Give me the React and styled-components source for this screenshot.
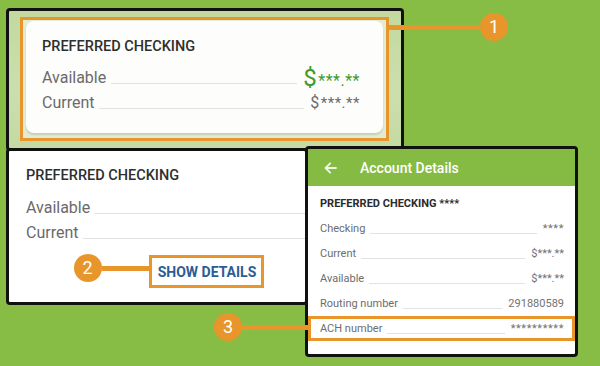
import styled, { createGlobalStyle } from "styled-components";

const GlobalStyle = createGlobalStyle`
  html, body {
    margin: 0;
    padding: 0;
    background: #87bc45;
  }
  body {
    font-family: Roboto, "Noto Sans", Arial, sans-serif;
    width: 600px;
    height: 366px;
    overflow: hidden;
  }
  * { box-sizing: border-box; }
`;

const ORANGE = "#e8952b";

const Board = styled.div`
  display: grid;
  grid-template-columns: 302px 270px;
  align-items: start;
  padding: 8px 0 0 6px;
`;

const Shot = styled.section`
  position: relative;
  border: 3px solid #111;
  border-radius: 4px;
  background: #fff;
`;

const SummaryShot = styled(Shot)`
  grid-column: 1 / -1;
  width: 398px;
  height: 143px;
  padding: 6px 0 0 11px;
  background: linear-gradient(180deg, #c3d99f 0%, #cbdfae 60%, #c4d9a3 100%);
`;

const CardShot = styled(Shot)`
  margin-top: -3px;
  height: 157px;
  overflow: hidden;
`;

const DetailsShot = styled(Shot)`
  margin: -5px 0 0 -3px;
  height: 211px;
  z-index: 1;
`;

const Frame = styled.div`
  position: relative;
  width: 369px;
  height: 124px;
  border: 3px solid ${ORANGE};
  background: #e2ebd3;
  padding: 1px 3px 5px;
`;

const Card = styled.div`
  height: 100%;
  background: #fdfdfc;
  border-radius: 8px;
  box-shadow: 0 2px 2px rgba(0, 0, 0, 0.12);
  padding: 16px 23px 0 16px;
`;

const Wide = styled.div`
  width: 392px;
  padding: 15px 0 0 17px;
`;

const Title = styled.div`
  font-size: 14.5px;
  font-weight: 500;
  line-height: 20px;
  color: #2e2e2e;
  margin-bottom: ${p => p.$gap}px;
`;

const Row = styled.div`
  display: flex;
  align-items: center;
  height: 25px;
  font-size: 16px;
  color: #6a6a6a;
`;

const Leader = styled.span`
  flex: 1;
  height: 1px;
  margin: ${p => p.$drop}px 6px 0 5px;
  background: #e2e2e2;
`;

const Money = styled.span`
  color: ${p => (p.$tone === "green" ? "#3f9a2a" : "#6a6a6a")};
  font-size: ${p => p.$size}px;
  letter-spacing: 0.5px;
`;

const Sign = styled.span`
  font-size: ${p => p.$size}px;
  margin-right: 1px;
`;

const Actions = styled.div`
  display: flex;
  justify-content: center;
  margin-top: 10px;
  padding-right: 14px;
`;

const ActionBox = styled.div`
  position: relative;
  border: 3px solid ${ORANGE};
  padding: 0 5px 0 6px;
  height: 33px;
  display: flex;
  align-items: center;
`;

const TextButton = styled.span`
  font-size: 14px;
  font-weight: 700;
  color: #2c5c94;
`;

const Callout = styled.div`
  position: absolute;
  top: ${p => p.$top}px;
  ${p => (p.$side === "right" ? "left: 100%;" : "right: 100%;")}
  display: flex;
  flex-direction: ${p => (p.$side === "right" ? "row" : "row-reverse")};
  align-items: center;
  transform: translateY(-50%);
`;

const Leash = styled.span`
  width: ${p => p.$length}px;
  height: 5px;
  background: ${ORANGE};
`;

const Badge = styled.span`
  width: 28px;
  height: 28px;
  border-radius: 50%;
  background: ${ORANGE};
  color: #fff;
  font-size: 18px;
  display: grid;
  place-items: center;
  line-height: 1;
`;

const AppBar = styled.header`
  height: 37px;
  background: #85bb43;
  display: flex;
  align-items: center;
  padding-left: 16px;
  gap: 23px;
  color: #fff;
  font-size: 14px;
  font-weight: 500;
`;

const DetailsBody = styled.div`
  padding: 5px 0 0;
`;

const DetailTitle = styled.div`
  height: 25px;
  display: flex;
  align-items: center;
  padding: 0 12px;
  font-size: 11px;
  font-weight: 700;
  color: #2b2b2b;
`;

const DetailRow = styled.div`
  position: relative;
  height: 25px;
  display: flex;
  align-items: center;
  padding: 0 11px 0 12px;
  font-size: 11px;
  color: #6d6d6d;
  box-shadow: ${p => (p.$marked ? `inset 0 0 0 3px ${ORANGE}` : "none")};
`;

const DetailValue = styled.span`
  color: #727272;
  letter-spacing: ${p => (p.$stars ? "0.6px" : "0")};
`;

function BackArrow() {
  return (
    <svg width="13" height="12" viewBox="0 0 13 12" fill="none">
      <path d="M12 6H1.8M6.2 1.3L1.5 6l4.7 4.7" stroke="#eef6e4" strokeWidth="1.8" strokeLinecap="round" strokeLinejoin="round" />
    </svg>
  );
}

function Pointer({ n, side, top, length }) {
  return (
    <Callout $side={side} $top={top}>
      <Leash $length={length} />
      <Badge>{n}</Badge>
    </Callout>
  );
}

const details = [
  { label: "Checking", value: "****", stars: true },
  { label: "Current", value: "$***.**" },
  { label: "Available", value: "$***.**" },
  { label: "Routing number", value: "291880589" },
  { label: "ACH number", value: "**********", stars: true, marked: true },
];

export default function App() {
  return (
    <>
      <GlobalStyle />
      <Board>
        <SummaryShot>
          <Frame>
            <Card>
              <Title $gap={8}>PREFERRED CHECKING</Title>
              <Row>
                Available
                <Leader $drop={12} />
                <Money $tone="green" $size={16}><Sign $size={24}>$</Sign>***.**</Money>
              </Row>
              <Row>
                Current
                <Leader $drop={12} />
                <Money $size={15}><Sign $size={16}>$</Sign>***.**</Money>
              </Row>
            </Card>
            <Pointer n="1" side="right" top={7} length={94} />
          </Frame>
        </SummaryShot>

        <CardShot>
          <Wide>
            <Title $gap={9}>PREFERRED CHECKING</Title>
            <Row>
              Available
              <Leader $drop={12} />
            </Row>
            <Row>
              Current
              <Leader $drop={12} />
            </Row>
            <Actions>
              <ActionBox>
                <TextButton>SHOW DETAILS</TextButton>
                <Pointer n="2" side="left" top={10} length={50} />
              </ActionBox>
            </Actions>
          </Wide>
        </CardShot>

        <DetailsShot>
          <AppBar>
            <BackArrow />
            Account Details
          </AppBar>
          <DetailsBody>
            <DetailTitle>PREFERRED CHECKING ****</DetailTitle>
            {details.map(d => (
              <DetailRow key={d.label} $marked={d.marked}>
                {d.label}
                <Leader $drop={10} />
                <DetailValue $stars={d.stars}>{d.value}</DetailValue>
                {d.marked && <Pointer n="3" side="left" top={11} length={66} />}
              </DetailRow>
            ))}
          </DetailsBody>
        </DetailsShot>
      </Board>
    </>
  );
}
